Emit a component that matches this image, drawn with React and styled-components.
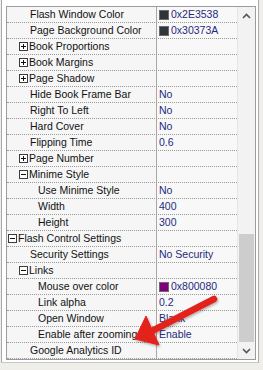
import React from 'react';
import styled, { createGlobalStyle } from 'styled-components';

const GlobalStyle = createGlobalStyle`
    html, body {
        margin: 0;
        padding: 0;
        background: #f0f0f0;
    }
`;

const Page = styled.div`
    position: relative;
    width: 263px;
    height: 370px;
    overflow: hidden;
    background: #efeee9;
    font-family: "Liberation Sans", Arial, sans-serif;
    font-size: 10.5px;
    display: flex;
    flex-direction: column;
`;

const Panel = styled.div`
    margin-left: 1px;
    width: 250px;
    background: #ffffff;
    border-left: 1px solid #a9a9a9;
    border-right: 1px solid #a9a9a9;
    border-bottom: 1px solid #c8c8c8;
    padding: 6px 2px 2px 4px;
`;

const Grid = styled.div`
    display: flex;
    border: 1px solid #9c9c9c;
    height: 352px;
    background: #f6f6f6;
`;

const Rows = styled.div`
    flex: 1;
    display: flex;
    flex-direction: column;
`;

const Row = styled.div`
    display: flex;
    height: 15px;
    border-bottom: 1px dotted #9a9a9a;
    line-height: 15px;
`;

const NameCell = styled.div`
    width: 150px;
    flex-shrink: 0;
    display: flex;
    align-items: center;
    padding-left: ${p => p.$indent}px;
    box-sizing: border-box;
    border-right: 1px solid #a8a8a8;
    white-space: nowrap;
    overflow: hidden;
    color: #111;
`;

const ValueCell = styled.div`
    flex: 1;
    display: flex;
    align-items: center;
    gap: 2px;
    padding-left: 2px;
    color: #242a7c;
    background: #f8f8f8;
    white-space: nowrap;
    overflow: hidden;
`;

const Expander = styled.span`
    width: 7px;
    height: 7px;
    border: 1px solid #3c3c3c;
    background: #fff;
    margin-right: 1px;
    position: relative;
    flex-shrink: 0;

    &::before {
        content: '';
        position: absolute;
        left: 1px;
        right: 1px;
        top: 3px;
        height: 1px;
        background: #111;
    }

    &::after {
        content: '';
        display: ${p => (p.$open ? 'none' : 'block')};
        position: absolute;
        top: 1px;
        bottom: 1px;
        left: 3px;
        width: 1px;
        background: #111;
    }
`;

const Swatch = styled.span`
    width: 10px;
    height: 10px;
    background: ${p => p.$color};
    border: 1px solid #6a6a6a;
    box-sizing: border-box;
    flex-shrink: 0;
`;

const ScrollBar = styled.div`
    width: 17px;
    display: flex;
    flex-direction: column;
    background: #f2f2f2;
    border-left: 1px solid #e6e6e6;
`;

const ScrollButton = styled.div`
    height: 17px;
    display: flex;
    align-items: center;
    justify-content: center;
    flex-shrink: 0;
`;

const Track = styled.div`
    flex: 1;
    display: flex;
    flex-direction: column;
    justify-content: flex-end;
`;

const Thumb = styled.div`
    height: 108px;
    margin: 0 1px;
    background: #cdcdcd;
`;

const Overlay = styled.svg`
    position: absolute;
    left: 0;
    top: 0;
    pointer-events: none;
`;

const items = [
    { label: 'Flash Window Color', lvl: 1, value: '0x2E3538', swatch: '#2e3538' },
    { label: 'Page Background Color', lvl: 1, value: '0x30373A', swatch: '#30373a' },
    { label: 'Book Proportions', lvl: 1, exp: 'closed' },
    { label: 'Book Margins', lvl: 1, exp: 'closed' },
    { label: 'Page Shadow', lvl: 1, exp: 'closed' },
    { label: 'Hide Book Frame Bar', lvl: 1, value: 'No' },
    { label: 'Right To Left', lvl: 1, value: 'No' },
    { label: 'Hard Cover', lvl: 1, value: 'No' },
    { label: 'Flipping Time', lvl: 1, value: '0.6' },
    { label: 'Page Number', lvl: 1, exp: 'closed' },
    { label: 'Minime Style', lvl: 1, exp: 'open' },
    { label: 'Use Minime Style', lvl: 2, value: 'No' },
    { label: 'Width', lvl: 2, value: '400' },
    { label: 'Height', lvl: 2, value: '300' },
    { label: 'Flash Control Settings', lvl: 0, exp: 'open' },
    { label: 'Security Settings', lvl: 1, value: 'No Security' },
    { label: 'Links', lvl: 1, exp: 'open' },
    { label: 'Mouse over color', lvl: 2, value: '0x800080', swatch: '#800080' },
    { label: 'Link alpha', lvl: 2, value: '0.2' },
    { label: 'Open Window', lvl: 2, value: 'Blank' },
    { label: 'Enable after zooming in', lvl: 2, value: 'Enable' },
    { label: 'Google Analytics ID', lvl: 1, value: '' },
];

// where the text (or the +/- box) starts inside the name column
function indentFor(item) {
    if (item.exp) return item.lvl === 0 ? 1 : 12;
    return item.lvl === 2 ? 31 : 23;
}

const Chevron = ({ up }) => (
    <svg width="9" height="6" viewBox="0 0 9 6">
        <polyline
            points={up ? '1,5 4.5,1.5 8,5' : '1,1 4.5,4.5 8,1'}
            fill="none"
            stroke="#555"
            strokeWidth="1.6"
        />
    </svg>
);

export default function App() {
    return (
        <Page>
            <GlobalStyle />
            <Panel>
                <Grid>
                    <Rows>
                        {items.map(item => (
                            <Row key={item.label}>
                                <NameCell $indent={indentFor(item)}>
                                    {item.exp && <Expander $open={item.exp === 'open'} />}
                                    {item.label}
                                </NameCell>
                                <ValueCell>
                                    {item.swatch && <Swatch $color={item.swatch} />}
                                    {item.value}
                                </ValueCell>
                            </Row>
                        ))}
                    </Rows>
                    <ScrollBar>
                        <ScrollButton><Chevron up /></ScrollButton>
                        <Track><Thumb /></Track>
                        <ScrollButton><Chevron /></ScrollButton>
                    </ScrollBar>
                </Grid>
            </Panel>
            <Overlay width="263" height="370">
                <defs>
                    <filter id="arrowShadow" x="-20%" y="-20%" width="140%" height="140%">
                        <feDropShadow dx="1" dy="1.5" stdDeviation="1.2" floodColor="#000" floodOpacity="0.3" />
                    </filter>
                </defs>
                <g filter="url(#arrowShadow)" fill="#e3241d" stroke="#e3241d">
                    <line x1="150" y1="332" x2="214" y2="299" strokeWidth="6.5" strokeLinecap="round" />
                    <polygon points="135,339 146,316 159,345" strokeWidth="1" strokeLinejoin="round" />
                </g>
            </Overlay>
        </Page>
    );
}
